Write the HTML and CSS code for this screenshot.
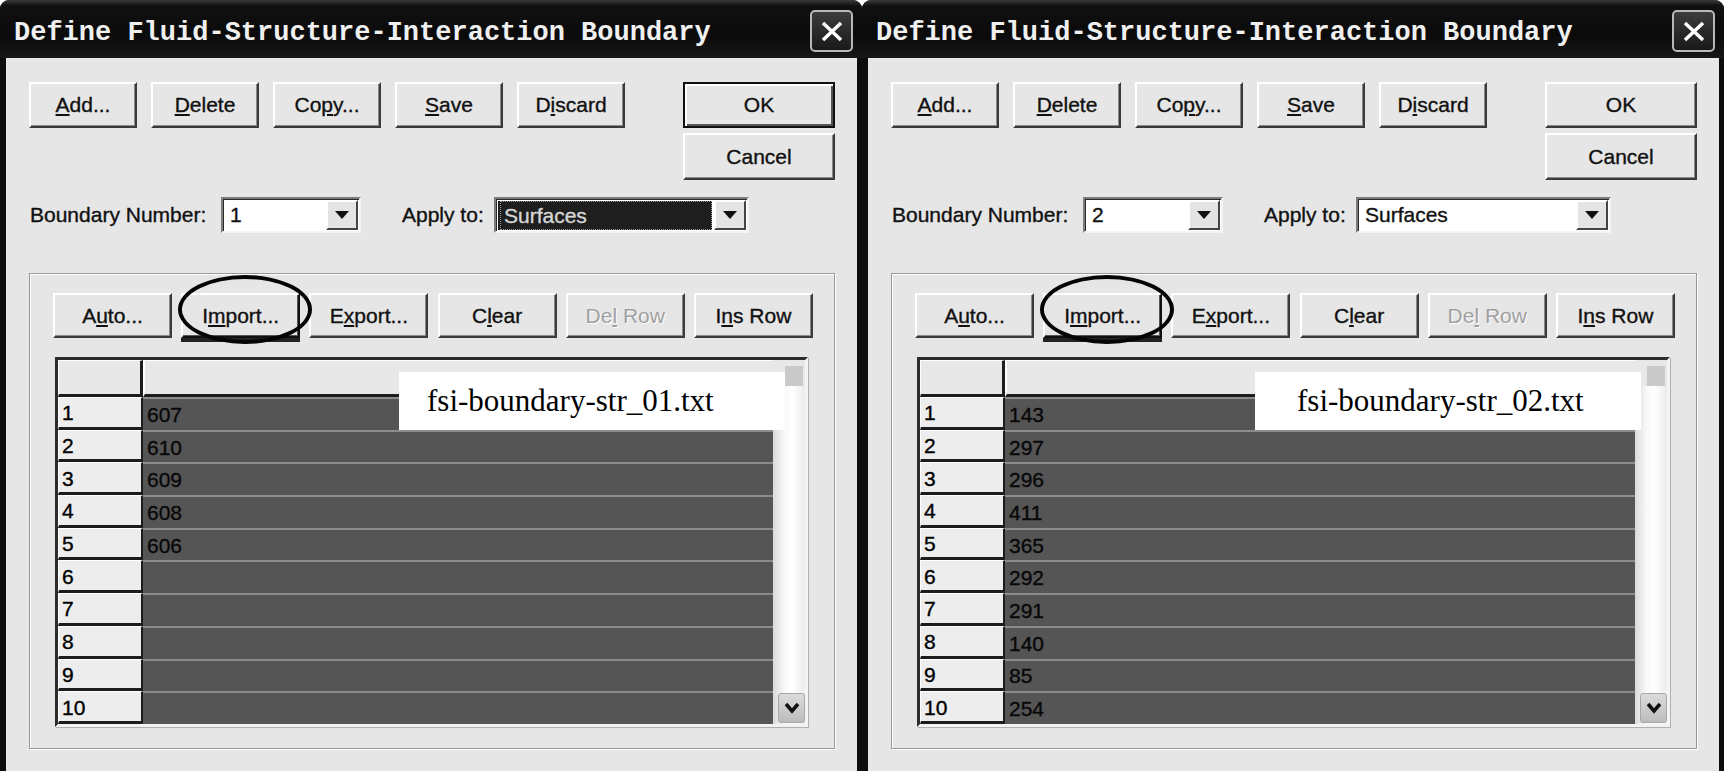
FILE: index.html
```html
<!DOCTYPE html>
<html>
<head>
<meta charset="utf-8">
<title>Define Fluid-Structure-Interaction Boundary</title>
<link rel="stylesheet" href="styles.css">
</head>
<body>

<div class="dialog">
  <div class="titlebar">
    <span class="title">Define Fluid-Structure-Interaction Boundary</span>
    <span class="close"><svg width="22" height="21" viewBox="0 0 22 21"><path d="M2 2 L20 19 M20 2 L2 19" stroke="#fff" stroke-width="3.5" fill="none"/></svg></span>
  </div>
  <div class="client">
    <div class="toprow">
      <div class="btnrow">
        <div class="btn"><span><u>A</u>dd...</span></div>
        <div class="btn"><span><u>D</u>elete</span></div>
        <div class="btn"><span>Co<u>p</u>y...</span></div>
        <div class="btn"><span><u>S</u>ave</span></div>
        <div class="btn"><span>D<u>i</u>scard</span></div>
      </div>
      <div class="okcol">
        <div class="btn btn-wide btn-default"><span>OK</span></div>
        <div class="btn btn-wide btn-cancel"><span>Cancel</span></div>
      </div>
    </div>
    <div class="fieldrow">
      <span class="lbl lbl-num">Boundary Number:</span>
      <div class="combo combo-num"><span class="val">1</span><span class="dd"><i class="tri"></i></span></div>
      <span class="lbl lbl-apply">Apply to:</span>
      <div class="combo combo-apply"><span class="val val-sel"><span class="focus">Surfaces</span></span><span class="dd"><i class="tri"></i></span></div>
    </div>
    <div class="group">
      <div class="gbtnrow">
        <div class="btn gbtn"><span>A<u>u</u>to...</span></div>
        <div class="btn gbtn gbtn-focus"><span>I<u>m</u>port...</span></div>
        <div class="btn gbtn"><span>E<u>x</u>port...</span></div>
        <div class="btn gbtn"><span>C<u>l</u>ear</span></div>
        <div class="btn gbtn disabled"><span>De<u>l</u> Row</span></div>
        <div class="btn gbtn"><span>I<u>n</u>s Row</span></div>
      </div>
      <div class="ring"></div>
      <div class="grid">
        <div class="table">
          <div class="hrow"><span class="rn"></span><span class="hd"></span></div>
          <div class="row"><span class="rn">1</span><span class="cell">607</span></div>
          <div class="row"><span class="rn">2</span><span class="cell">610</span></div>
          <div class="row"><span class="rn">3</span><span class="cell">609</span></div>
          <div class="row"><span class="rn">4</span><span class="cell">608</span></div>
          <div class="row"><span class="rn">5</span><span class="cell">606</span></div>
          <div class="row"><span class="rn">6</span><span class="cell"></span></div>
          <div class="row"><span class="rn">7</span><span class="cell"></span></div>
          <div class="row"><span class="rn">8</span><span class="cell"></span></div>
          <div class="row"><span class="rn">9</span><span class="cell"></span></div>
          <div class="row"><span class="rn">10</span><span class="cell"></span></div>
        </div>
        <div class="vscroll">
          <div class="vs-head"><span class="vs-sq"></span></div>
          <div class="vs-track"></div>
          <div class="vs-down"><svg width="16" height="12" viewBox="0 0 16 12"><path d="M2 2 L8 9 L14 2" stroke="#111" stroke-width="3.5" fill="none"/></svg></div>
        </div>
        <div class="fname fname-a">fsi-boundary-str_01.txt</div>
      </div>
    </div>
  </div>
</div>

<div class="dialog">
  <div class="titlebar">
    <span class="title">Define Fluid-Structure-Interaction Boundary</span>
    <span class="close"><svg width="22" height="21" viewBox="0 0 22 21"><path d="M2 2 L20 19 M20 2 L2 19" stroke="#fff" stroke-width="3.5" fill="none"/></svg></span>
  </div>
  <div class="client">
    <div class="toprow">
      <div class="btnrow">
        <div class="btn"><span><u>A</u>dd...</span></div>
        <div class="btn"><span><u>D</u>elete</span></div>
        <div class="btn"><span>Co<u>p</u>y...</span></div>
        <div class="btn"><span><u>S</u>ave</span></div>
        <div class="btn"><span>D<u>i</u>scard</span></div>
      </div>
      <div class="okcol">
        <div class="btn btn-wide"><span>OK</span></div>
        <div class="btn btn-wide btn-cancel"><span>Cancel</span></div>
      </div>
    </div>
    <div class="fieldrow">
      <span class="lbl lbl-num">Boundary Number:</span>
      <div class="combo combo-num"><span class="val">2</span><span class="dd"><i class="tri"></i></span></div>
      <span class="lbl lbl-apply">Apply to:</span>
      <div class="combo combo-apply"><span class="val">Surfaces</span><span class="dd"><i class="tri"></i></span></div>
    </div>
    <div class="group">
      <div class="gbtnrow">
        <div class="btn gbtn"><span>A<u>u</u>to...</span></div>
        <div class="btn gbtn gbtn-focus"><span>I<u>m</u>port...</span></div>
        <div class="btn gbtn"><span>E<u>x</u>port...</span></div>
        <div class="btn gbtn"><span>C<u>l</u>ear</span></div>
        <div class="btn gbtn disabled"><span>De<u>l</u> Row</span></div>
        <div class="btn gbtn"><span>I<u>n</u>s Row</span></div>
      </div>
      <div class="ring"></div>
      <div class="grid">
        <div class="table">
          <div class="hrow"><span class="rn"></span><span class="hd"></span></div>
          <div class="row"><span class="rn">1</span><span class="cell">143</span></div>
          <div class="row"><span class="rn">2</span><span class="cell">297</span></div>
          <div class="row"><span class="rn">3</span><span class="cell">296</span></div>
          <div class="row"><span class="rn">4</span><span class="cell">411</span></div>
          <div class="row"><span class="rn">5</span><span class="cell">365</span></div>
          <div class="row"><span class="rn">6</span><span class="cell">292</span></div>
          <div class="row"><span class="rn">7</span><span class="cell">291</span></div>
          <div class="row"><span class="rn">8</span><span class="cell">140</span></div>
          <div class="row"><span class="rn">9</span><span class="cell">85</span></div>
          <div class="row"><span class="rn">10</span><span class="cell">254</span></div>
        </div>
        <div class="vscroll">
          <div class="vs-head"><span class="vs-sq"></span></div>
          <div class="vs-track"></div>
          <div class="vs-down"><svg width="16" height="12" viewBox="0 0 16 12"><path d="M2 2 L8 9 L14 2" stroke="#111" stroke-width="3.5" fill="none"/></svg></div>
        </div>
        <div class="fname fname-b">fsi-boundary-str_02.txt</div>
      </div>
    </div>
  </div>
</div>

</body>
</html>
```

FILE: styles.css
```css
* { box-sizing: border-box; }
html, body { margin: 0; padding: 0; }
body {
  width: 1725px;
  height: 771px;
  overflow: hidden;
  background: #ffffff;
  display: flex;
  font-family: "Liberation Sans", Arial, sans-serif;
  font-size: 21px;
  color: #111;
  -webkit-text-stroke: 0.35px currentColor;
}

.dialog {
  flex: none;
  width: 862px;
  height: 771px;
  background: #0d0d0d;
  border-radius: 9px 9px 0 0;
  display: flex;
  flex-direction: column;
}

.titlebar {
  flex: none;
  height: 58px;
  display: flex;
  align-items: center;
  justify-content: space-between;
  padding: 4px 9px 0 14px;
  border-radius: 9px 9px 0 0;
  background: linear-gradient(#3a3a3a, #101010 10%, #0b0b0b 60%, #161616);
}
.title {
  font-family: "Liberation Mono", "DejaVu Sans Mono", monospace;
  font-weight: bold;
  font-size: 27px;
  color: #f0f0f0;
  white-space: nowrap;
  -webkit-text-stroke: 0;
  padding-top: 3px;
}
.close {
  width: 43px;
  height: 42px;
  border: 2px solid #b8b8b8;
  border-radius: 5px;
  background: linear-gradient(#3c3c3c, #1a1a1a);
  display: flex;
  align-items: center;
  justify-content: center;
}

.client {
  flex: 1;
  margin: 0 5px 0 6px;
  background: #e6e6e6;
  padding: 24px 22px 0 23px;
  display: flex;
  flex-direction: column;
}

.toprow {
  display: flex;
  justify-content: space-between;
  align-items: flex-start;
}
.btnrow { display: flex; gap: 14px; }

.btn {
  width: 108px;
  height: 46px;
  background: #e6e6e6;
  border: 2px solid;
  border-color: #ffffff #3a3a3a #3a3a3a #ffffff;
  box-shadow: inset -1px -1px 0 #8a8a8a;
  display: flex;
  align-items: center;
  justify-content: center;
  white-space: nowrap;
  color: #111;
}
.btn u { text-decoration-thickness: 2px; text-underline-offset: 2px; }

.okcol { display: flex; flex-direction: column; gap: 5px; }
.btn-wide { width: 152px; }
.btn-cancel { height: 47px; }
.btn-default {
  border: 2px solid #111;
  box-shadow: inset 2px 2px 0 #fff, inset -2px -2px 0 #555;
}

.fieldrow {
  display: flex;
  align-items: center;
  margin-top: 17px;
  height: 36px;
}
.lbl { white-space: nowrap; }
.lbl-num { width: 192px; padding-left: 1px; }
.lbl-apply { width: 92px; margin-left: 41px; }

.combo {
  display: flex;
  height: 36px;
  background: #fff;
  border: 2px solid;
  border-color: #7c7c7c #f4f4f4 #f4f4f4 #7c7c7c;
  box-shadow: inset 1px 1px 0 #2a2a2a;
  padding: 1px 1px 1px 2px;
}
.combo-num { width: 140px; }
.combo-apply { width: 255px; }
.val {
  flex: 1;
  display: flex;
  align-items: center;
  padding-left: 5px;
}
.val-sel {
  background: #1e1e1e;
  color: #d6d6d6;
  margin: 1px 2px 0 0;
  padding-left: 2px;
}
.focus {
  flex: 1;
  align-self: stretch;
  display: flex;
  align-items: center;
  padding-left: 3px;
  border: 1px dotted #9a9a9a;
}
.dd {
  width: 32px;
  background: #e4e4e4;
  border: 2px solid;
  border-color: #ffffff #444 #444 #ffffff;
  display: flex;
  align-items: center;
  justify-content: center;
}
.tri {
  width: 0;
  height: 0;
  border-left: 7px solid transparent;
  border-right: 7px solid transparent;
  border-top: 8px solid #111;
}

.group {
  position: relative;
  margin-top: 40px;
  width: 806px;
  height: 476px;
  border: 1px solid #999;
  box-shadow: inset 1px 1px 0 #fff, 1px 1px 0 #fff;
  padding: 19px 0 0 23px;
}
.gbtnrow { display: flex; gap: 9.2px; }
.gbtn { width: 119px; height: 45px; }
.gbtn-focus {
  border-color: #fff #111 #111 #fff;
  box-shadow: inset -1px -1px 0 #555, 0 4px 0 #222;
}
.disabled { color: #a0a0a0; text-shadow: 1px 1px 0 #fff; -webkit-text-stroke: 0; }

.ring {
  position: absolute;
  left: 148px;
  top: 1px;
  width: 134px;
  height: 69px;
  border: 4px solid #050505;
  border-radius: 50%;
}

.grid {
  position: relative;
  margin-top: 19px;
  margin-left: 2px;
  width: 753px;
  height: 370px;
  display: flex;
  border-top: 3px solid #2c2c2c;
  border-left: 3px solid #2c2c2c;
  border-right: 3px solid #f4f4f4;
  border-bottom: 3px solid #f2f2f2;
  box-shadow: 1px 1px 0 #b0b0b0;
}
.table {
  width: 715px;
  display: flex;
  flex-direction: column;
}
.hrow { height: 37px; display: flex; flex: none; }
.hrow .rn {
  width: 85px;
  background: #e8e8e8;
  border-top: 1px solid #fff;
  border-left: 1px solid #fff;
  border-right: 3px solid #1c1c1c;
  border-bottom: 3px solid #1c1c1c;
}
.hrow .hd {
  flex: 1;
  background: #e8e8e8;
  border-top: 1px solid #fff;
  border-left: 2px solid #fff;
  border-bottom: 3px solid #1c1c1c;
}
.row { height: 32.7px; display: flex; flex: none; }
.row .rn {
  width: 85px;
  background: #ededed;
  border-top: 1px solid #fff;
  border-left: 1px solid #fff;
  border-right: 2px solid #1c1c1c;
  border-bottom: 3px solid #1c1c1c;
  padding: 2px 0 0 3px;
  display: flex;
  align-items: center;
  color: #000;
}
.row .cell {
  flex: 1;
  background: #555555;
  border-top: 2px solid #8c8c8c;
  padding: 1px 0 0 4px;
  display: flex;
  align-items: center;
  color: #080808;
}

.vscroll {
  width: 32px;
  display: flex;
  flex-direction: column;
  background: linear-gradient(to right, #dadada, #f8f8f8 35%, #ffffff 60%, #ececec);
}
.vs-head {
  height: 26px;
  background: #e8e8e8;
  padding: 6px 0 0 12px;
}
.vs-sq {
  display: block;
  width: 18px;
  height: 20px;
  background: #c9c9c9;
}
.vs-track { flex: 1; }
.vs-down {
  height: 30px;
  width: 27px;
  margin: 0 0 1px 5px;
  background: linear-gradient(#dcdcdc, #bcbcbc);
  border: 1px solid #a8a8a8;
  border-radius: 3px;
  display: flex;
  align-items: center;
  justify-content: center;
}

.fname {
  position: absolute;
  top: 12px;
  height: 58px;
  width: 386px;
  background: #fff;
  color: #000;
  font-family: "Liberation Serif", "Times New Roman", serif;
  font-size: 31px;
  -webkit-text-stroke: 0;
  display: flex;
  align-items: center;
  white-space: nowrap;
}
.fname-a { left: 341px; padding-left: 28px; }
.fname-b { left: 335px; padding-left: 42px; }
```
